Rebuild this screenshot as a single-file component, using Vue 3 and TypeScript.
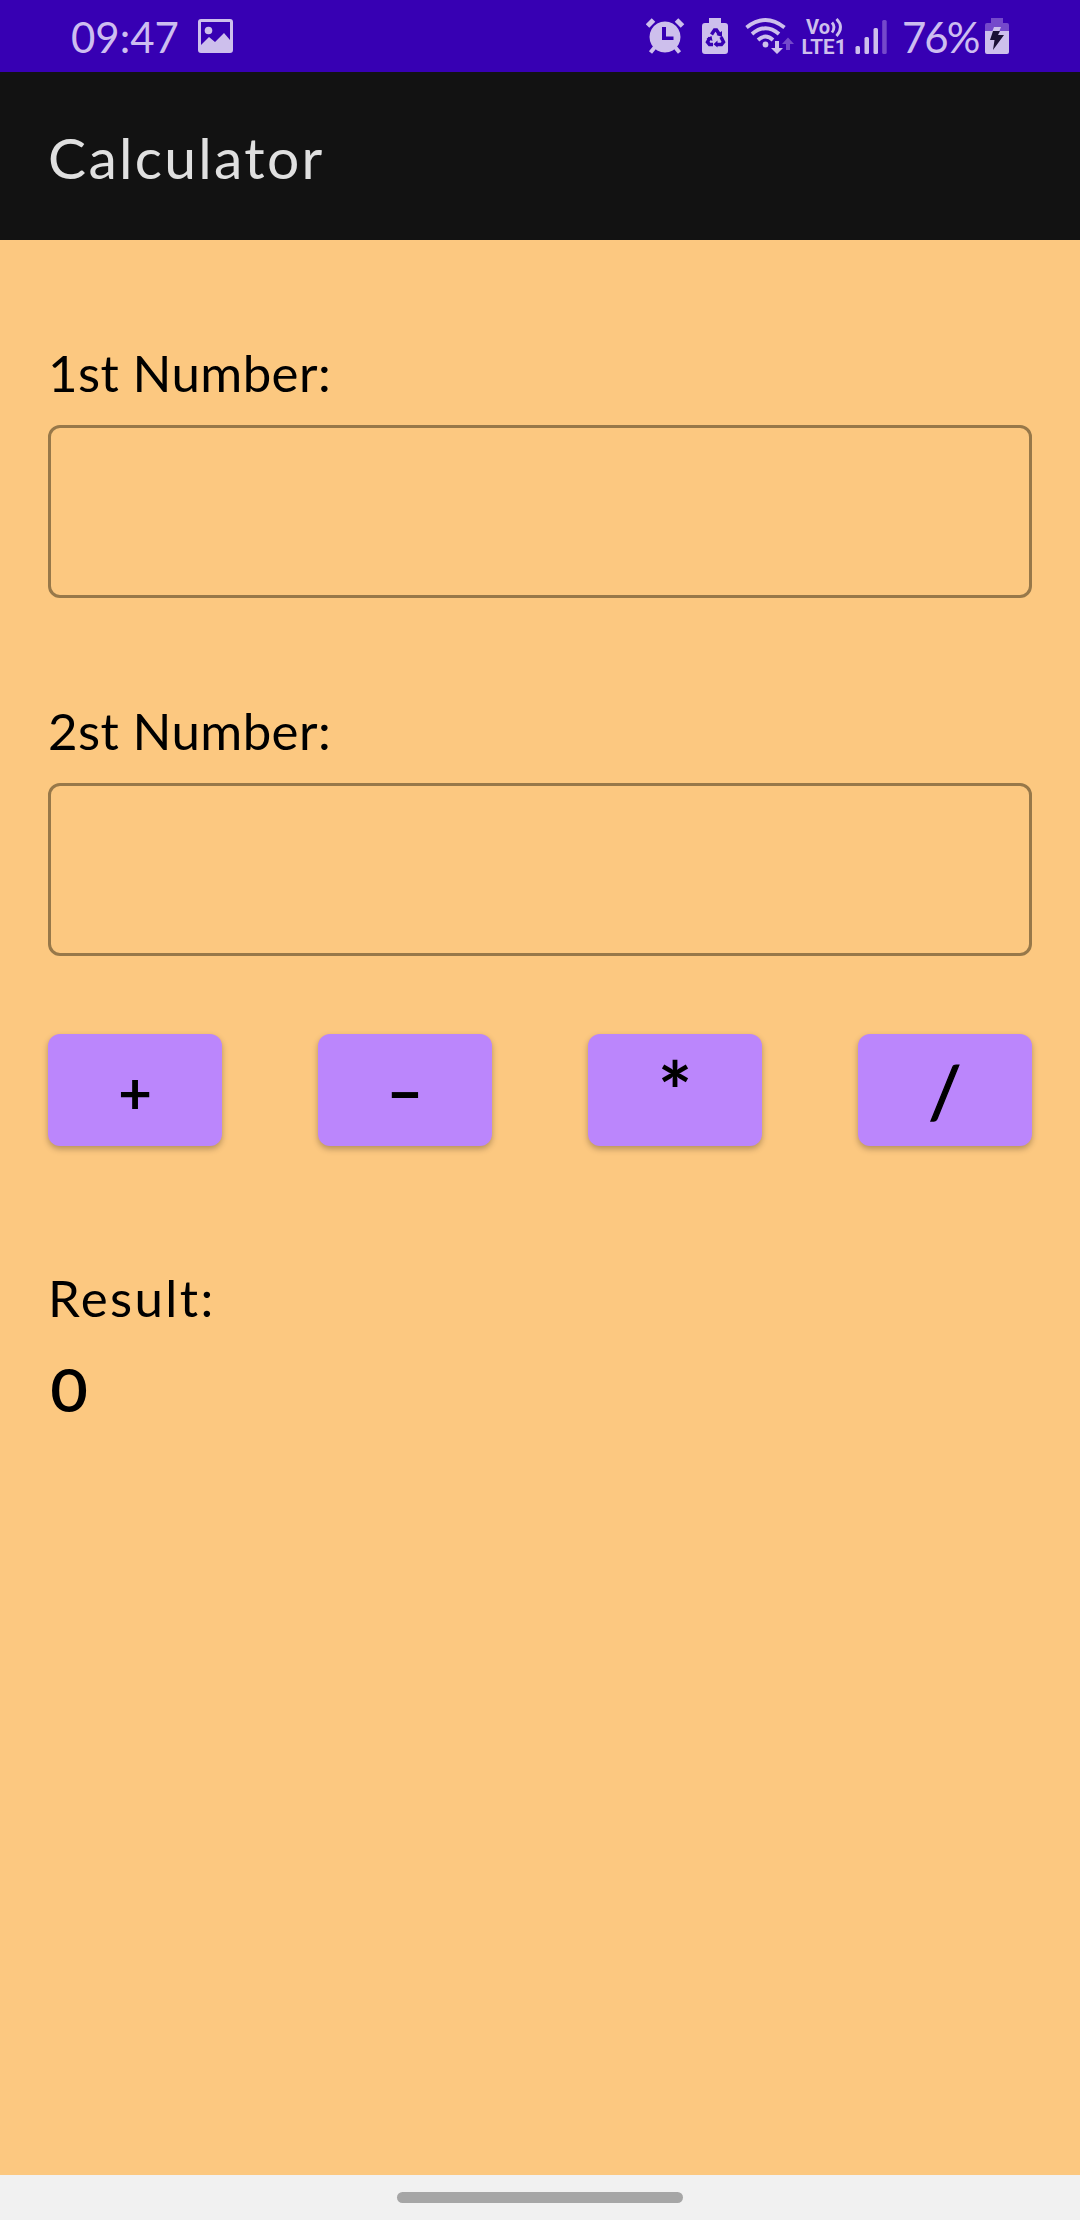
<script setup lang="ts">
import { ref } from 'vue'

interface Operator {
  name: string
  symbol: string
}

const first = ref('')
const second = ref('')
const result = ref('0')

const operators: Operator[] = [
  { name: 'add', symbol: '+' },
  { name: 'subtract', symbol: '-' },
  { name: 'multiply', symbol: '*' },
  { name: 'divide', symbol: '/' },
]

function calculate(symbol: string): void {
  const a = Number(first.value)
  const b = Number(second.value)
  const value =
    symbol === '+' ? a + b : symbol === '-' ? a - b : symbol === '*' ? a * b : a / b
  result.value = String(value)
}
</script>

<template>
  <div class="screen">
    <header class="status">
      <span class="time">09:47</span>
      <svg class="picture" width="36" height="72" viewBox="197 0 36 72">
        <path fill-rule="evenodd" d="M201 19h29q3 0 3 3v28q0 3-3 3h-29q-3 0-3-3V22q0-3 3-3zM201 22v23l8-8 6 5 9-9 6 7V22z" />
        <circle cx="208.500" cy="30.500" r="3.800" />
      </svg>
      <span class="spacer"></span>
      <svg width="39" height="72" viewBox="646 0 39 72">
        <path fill-rule="evenodd" d="M665 21.500a15.500 15.500 0 1 0 .01 0zM662 27h4v9.500h7.500V40H662z" />
        <path class="line" stroke-width="5" d="M647.500 26l6-6M682.500 26l-6-6" />
        <path class="line" stroke-width="4" d="M655 47l-4.500 5.500M675 47l4.500 5.500" />
      </svg>
      <svg class="saver" width="26" height="72" viewBox="702 0 26 72">
        <path d="M709 18h12v5h4q3 0 3 3v25q0 3-3 3h-20q-3 0-3-3V26q0-3 3-3h4z" />
        <g class="recycle">
          <path d="M711.500 34.500l3-4.500h2l3 4.500" />
          <path d="M721 37l2.500 5-2 2.500H717" />
          <path d="M713 44.500h-3.500l-2-2.500 2.500-4.500" />
        </g>
        <path class="recycle-tip" d="M716.500 35l5.500 2V31zM717.500 40.500v7l-4-3.300zM706.500 38.500l5-2.500 1 5z" />
      </svg>
      <svg class="wifi" width="50" height="72" viewBox="744 0 50 72">
        <path class="line" stroke-width="3.800" d="M746.500 27.500Q765.500 12.500 784.500 27.500M752 34Q765.500 22.500 779 34M758 40Q765.500 33 773 40" />
        <circle cx="765.500" cy="44.500" r="2.900" />
        <path d="M775 41h4v7h4l-6 6-6-6h4z" />
        <path class="faint" d="M786 50h4v-6h4l-6-6.500-6 6.500h4z" />
      </svg>
      <svg class="volte" width="44" height="72" viewBox="802 0 44 72">
        <text x="806" y="33.500" font-size="20" textLength="24" lengthAdjust="spacingAndGlyphs">Vo</text>
        <text x="801.500" y="53.500" font-size="21" textLength="45" lengthAdjust="spacingAndGlyphs">LTE1</text>
        <path class="line" stroke-width="2.800" d="M832 22.500q4 4.500 0 10M836.500 19q8 8 0 17" />
      </svg>
      <svg class="signal" width="32" height="72" viewBox="855 0 32 72">
        <rect x="855.500" y="46" width="4.500" height="8" rx="1.500" />
        <rect x="864.500" y="37" width="4.500" height="17" rx="1.500" />
        <rect x="873.500" y="28" width="4.500" height="26" rx="1.500" />
        <rect class="faint" x="882.200" y="20" width="4.500" height="34" rx="1.500" />
      </svg>
      <span class="percent">76%</span>
      <svg width="24" height="72" viewBox="985 0 24 72">
        <path class="faint" d="M991 18h12v5h4q2 0 2 2v6h-24v-6q0-2 2-2h4z" />
        <path d="M985 31h24v21q0 2-2 2h-20q-2 0-2-2z" />
        <path d="M994 27h7l-2 5h-7z" />
        <path class="bolt" d="M993 31h7l-2 4h6l-11 15 1.500-10H990z" />
      </svg>
    </header>

    <div class="toolbar"><h1>Calculator</h1></div>

    <main>
      <label for="first">1st Number:</label>
      <input id="first" v-model="first" type="text" />
      <label for="second" class="second">2st Number:</label>
      <input id="second" v-model="second" type="text" />
      <div class="operators">
        <button
          v-for="op in operators"
          :key="op.name"
          type="button"
          :class="op.name"
          @click="calculate(op.symbol)"
        ><span>{{ op.symbol }}</span></button>
      </div>
      <div class="caption">Result:</div>
      <output>{{ result }}</output>
    </main>

    <footer><span class="handle"></span></footer>
  </div>
</template>

<style>
body {
  margin: 0;
}
</style>

<style scoped>
.screen {
  width: 1080px;
  height: 2220px;
  display: flex;
  flex-direction: column;
  overflow: hidden;
  background: #fcc880;
  color: #000;
  font-family: Lato, "Open Sans", sans-serif;
}

.status {
  flex: none;
  height: 72px;
  box-sizing: border-box;
  padding: 0 71px 0 71px;
  display: flex;
  background: #3700b3;
  color: #cdbdf0;
}

.status svg {
  flex: none;
  fill: #cdbfec;
}

.time,
.percent {
  flex: none;
  font-size: 42px;
  line-height: 75px;
  white-space: nowrap;
}

.time {
  width: 126px;
}

.percent {
  width: 83px;
  margin-left: 15px;
  letter-spacing: -2px;
}

.spacer {
  flex: 1;
}

.status .line {
  fill: none;
  stroke: #cdbfec;
}

.faint {
  fill: #7549cb;
}

.bolt {
  fill: #1b1035;
}

.recycle {
  fill: none;
  stroke: #3700b3;
  stroke-width: 3.5;
}

.recycle-tip {
  fill: #3700b3;
}

.saver {
  margin-left: 17px;
}

.wifi {
  margin-left: 16px;
}

.volte {
  margin-left: 8px;
  overflow: visible;
  font-family: Roboto, sans-serif;
  font-weight: 700;
}

.signal {
  margin-left: 9px;
}

.toolbar {
  flex: none;
  height: 168px;
  box-sizing: border-box;
  padding: 0 48px;
  background: #121212;
  color: #e0e0e0;
}

h1 {
  margin: 0;
  font-size: 57px;
  font-weight: 400;
  line-height: 171px;
  letter-spacing: 2.3px;
}

main {
  flex: 1;
  padding: 100px 48px 0;
  display: flex;
  flex-direction: column;
}

label,
.caption {
  height: 85px;
  font-size: 51px;
  line-height: 65px;
  letter-spacing: 0.4px;
}

.second {
  margin-top: 100px;
}

input {
  height: 173px;
  box-sizing: border-box;
  padding: 0 36px;
  border: 3px solid #977849;
  border-radius: 12px;
  background: transparent;
  font: inherit;
  font-size: 50px;
  outline: none;
}

.operators {
  margin-top: 78px;
  display: flex;
  justify-content: space-between;
}

button {
  width: 174px;
  height: 112px;
  padding: 0;
  border: 0;
  border-radius: 12px;
  background: #bb86fc;
  box-shadow: 0 3px 6px rgba(0, 0, 0, 0.28);
  color: #000;
  font-family: inherit;
  font-size: 58px;
  font-weight: 700;
  line-height: 112px;
}

button span {
  display: block;
}

.add span {
  transform: translateY(2px);
}

.subtract span {
  transform: scaleX(1.75);
}

.multiply span {
  transform: scale(1.4);
}

.divide span {
  font-weight: 400;
  transform: scale(1.25);
  -webkit-text-stroke: 1px #000;
}

.caption {
  margin-top: 119px;
  letter-spacing: 2.4px;
}

output {
  margin-top: 2px;
  padding-left: 2px;
  font-size: 59px;
  font-weight: 600;
  line-height: 76px;
  transform: scaleX(1.1);
  transform-origin: left;
}

footer {
  flex: none;
  height: 45px;
  display: flex;
  justify-content: center;
  align-items: flex-start;
  background: #f1f1f1;
}

.handle {
  width: 286px;
  height: 11px;
  margin-top: 17px;
  border-radius: 6px;
  background: #a6a6a6;
}
</style>
